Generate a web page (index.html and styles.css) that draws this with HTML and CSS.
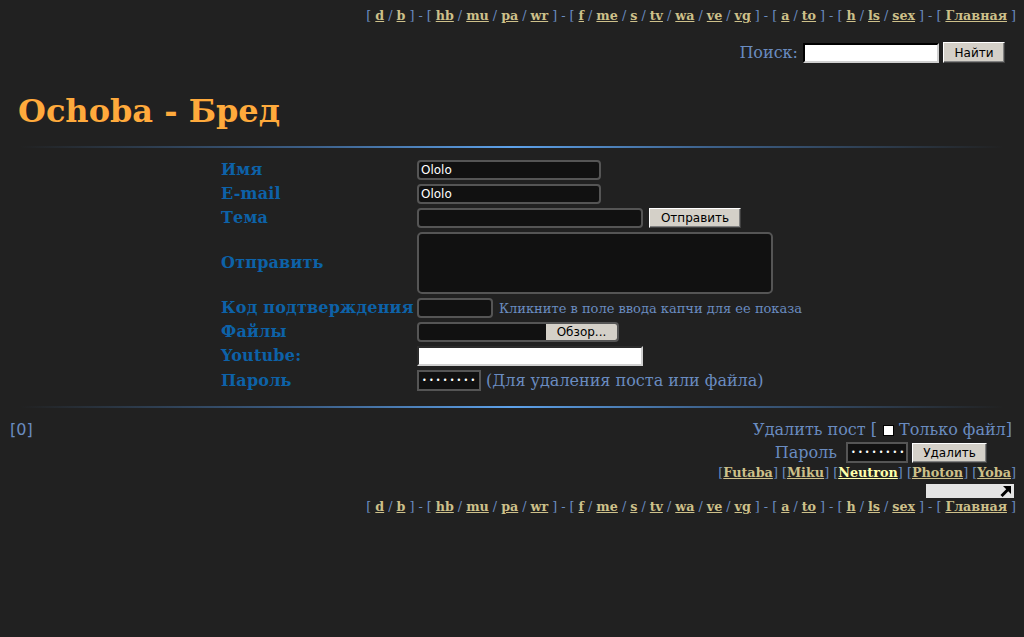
FILE: index.html
```html
<!DOCTYPE html>
<html lang="ru">
<head>
<meta charset="utf-8">
<title>Ochoba - Бред</title>
<link rel="stylesheet" href="styles.css">
</head>
<body>
<div class="nav">
[ <a href="#">d</a> / <a href="#">b</a> ] - [ <a href="#">hb</a> / <a href="#">mu</a> / <a href="#">pa</a> / <a href="#">wr</a> ] - [ <a href="#">f</a> / <a href="#">me</a> / <a href="#">s</a> / <a href="#">tv</a> / <a href="#">wa</a> / <a href="#">ve</a> / <a href="#">vg</a> ] - [ <a href="#">a</a> / <a href="#">to</a> ] - [ <a href="#">h</a> / <a href="#">ls</a> / <a href="#">sex</a> ] - [ <a href="#">Главная</a> ]
</div>
<div class="search">
<span class="search-label">Поиск:</span>
<span class="white-input search-input"></span>
<span class="btn search-btn">Найти</span>
</div>
<h1 class="title">Ochoba - Бред</h1>
<div class="hr"></div>
<div class="postform">
  <div class="label">Имя</div>
  <div class="field"><span class="dark-input w183">Ololo</span></div>
  <div class="label">E-mail</div>
  <div class="field"><span class="dark-input w183">Ololo</span></div>
  <div class="label">Тема</div>
  <div class="field"><span class="dark-input w225"></span><span class="btn send-btn">Отправить</span></div>
  <div class="label">Отправить</div>
  <div class="field"><span class="dark-input textarea"></span></div>
  <div class="label">Код подтверждения</div>
  <div class="field"><span class="dark-input w75"></span><span class="hint">Кликните в поле ввода капчи для ее показа</span></div>
  <div class="label">Файлы</div>
  <div class="field"><span class="dark-input file"><span class="file-empty"></span><span class="file-btn">Обзор...</span></span></div>
  <div class="label">Youtube:</div>
  <div class="field"><span class="white-input w225"></span></div>
  <div class="label">Пароль</div>
  <div class="field"><span class="pass-input w64">••••••••</span><span class="note">(Для удаления поста или файла)</span></div>
</div>
<div class="hr hr2"></div>
<div class="footer">
  <div class="pages">[0]</div>
  <div class="right">
    <div class="del-line">Удалить пост [<span class="check"></span>Только файл]</div>
    <div class="del-line pass-line">Пароль <span class="pass-input w62">••••••••</span> <span class="btn del-btn">Удалить</span></div>
    <div class="styles">[<a href="#">Futaba</a>] [<a href="#">Miku</a>] [<a href="#" class="cur">Neutron</a>] [<a href="#">Photon</a>] [<a href="#">Yoba</a>]</div>
    <div class="sel-line"><span class="select"><svg width="12" height="12" viewBox="0 0 12 12"><path d="M1.5 11 L9 3.5" stroke="#000" stroke-width="3"/><path d="M3 1 H11 V9 Z" fill="#000"/></svg></span></div>
    <div class="nav nav-bottom">
[ <a href="#">d</a> / <a href="#">b</a> ] - [ <a href="#">hb</a> / <a href="#">mu</a> / <a href="#">pa</a> / <a href="#">wr</a> ] - [ <a href="#">f</a> / <a href="#">me</a> / <a href="#">s</a> / <a href="#">tv</a> / <a href="#">wa</a> / <a href="#">ve</a> / <a href="#">vg</a> ] - [ <a href="#">a</a> / <a href="#">to</a> ] - [ <a href="#">h</a> / <a href="#">ls</a> / <a href="#">sex</a> ] - [ <a href="#">Главная</a> ]
    </div>
  </div>
</div>
</body>
</html>
```
FILE: styles.css
```css
html, body {
  background: #212121;
}
body {
  margin: 0;
  padding: 8px 8px 0 8px;
  font-family: "DejaVu Serif", serif;
  color: #6a8cc0;
  font-size: 16px;
}
a {
  color: #cdc08a;
  font-weight: bold;
}
.nav {
  text-align: right;
  font-size: 12.7px;
  line-height: 16px;
}
.search {
  display: flex;
  justify-content: flex-end;
  align-items: center;
  gap: 4px;
  margin-top: 18px;
  padding-right: 11px;
}
.search-label {
  font-size: 16px;
  margin-right: 1px;
}
.white-input {
  display: inline-block;
  box-sizing: border-box;
  background: #fff;
  border: 2px inset #d0d0d0;
  border-top-color: #808080;
  border-left-color: #808080;
  height: 20px;
}
.search-input {
  width: 136px;
  border-top-color: #000;
  border-left-color: #000;
}
.btn {
  display: inline-flex;
  align-items: center;
  justify-content: center;
  box-sizing: border-box;
  background: #d4d0c8;
  color: #000;
  font-family: "DejaVu Sans", sans-serif;
  font-size: 12px;
  height: 21px;
  border: 1px solid;
  border-color: #fff #404040 #404040 #fff;
  box-shadow: inset -1px -1px 0 #808080;
}
.search-btn {
  width: 62px;
}
.title {
  margin: 0;
  padding: 28px 0 0 10px;
  font-size: 32px;
  font-weight: bold;
  color: #ffaa3c;
  line-height: 40px;
}
.hr {
  height: 2px;
  margin: 15px 12px 0 12px;
  background: linear-gradient(to right, rgba(80,140,210,0) 0%, rgba(80,140,210,0.6) 30%, #5ea2ea 50%, rgba(80,140,210,0.6) 70%, rgba(80,140,210,0) 100%);
}
.postform {
  display: grid;
  grid-template-columns: 196px auto;
  row-gap: 4px;
  margin: 12px 0 0 213px;
  align-items: center;
}
.label {
  color: #0d62a8;
  font-weight: bold;
  font-size: 16px;
  letter-spacing: 0.2px;
  line-height: 20px;
  white-space: nowrap;
}
.field {
  display: flex;
  align-items: center;
}
.dark-input {
  display: inline-flex;
  align-items: center;
  box-sizing: border-box;
  height: 20px;
  background: #111;
  border: 2px solid #555;
  border-radius: 4px;
  color: #fff;
  font-family: "DejaVu Sans", sans-serif;
  font-size: 12px;
  padding-left: 2px;
}
.w183 { width: 184px; }
.w225 { width: 226px; }
.w75 { width: 76px; }
.w64 { width: 64px; }
.w62 { width: 62px; }
.send-btn {
  width: 92px;
  height: 20px;
  margin-left: 6px;
}
.textarea {
  width: 356px;
  height: 62px;
  border-radius: 5px;
}
.hint {
  font-size: 13px;
  margin-left: 6px;
}
.file {
  width: 202px;
  padding: 0;
  overflow: hidden;
}
.file-empty {
  flex: 1;
}
.file-btn {
  width: 71px;
  height: 100%;
  background: #d4d0c8;
  color: #000;
  display: flex;
  align-items: center;
  justify-content: center;
}
.pass-input {
  display: inline-flex;
  align-items: center;
  box-sizing: border-box;
  height: 21px;
  background: #111;
  border: 2px solid #555;
  color: #fff;
  font-family: "DejaVu Sans", sans-serif;
  font-size: 8px;
  letter-spacing: 2.2px;
  padding-left: 3px;
  overflow: hidden;
}
.note {
  margin-left: 5px;
  font-size: 16px;
}
.hr2 {
  margin-top: 15px;
}
.footer {
  display: flex;
  justify-content: space-between;
  align-items: flex-start;
  margin-top: 12px;
}
.pages {
  font-family: "DejaVu Sans", sans-serif;
  font-weight: normal;
  padding-left: 2px;
  line-height: 20px;
}
.right {
  display: flex;
  flex-direction: column;
  align-items: flex-end;
}
.del-line {
  line-height: 20px;
  padding-right: 4px;
  display: flex;
  align-items: center;
  white-space: pre;
}
.check {
  display: inline-block;
  width: 9px;
  height: 9px;
  background: #fff;
  border: 1px solid #000;
  margin: 0 5px 0 6px;
}
.pass-line {
  padding-right: 29px;
  margin-top: 2px;
  gap: 4px;
}
.del-btn {
  width: 75px;
  height: 20px;
}
.styles {
  font-size: 12.8px;
  line-height: 16px;
  margin-top: 2px;
}
.styles a.cur {
  color: #ffffaa;
}
.sel-line {
  padding-right: 2px;
  margin-top: 3px;
}
.select {
  display: flex;
  justify-content: flex-end;
  align-items: center;
  width: 88px;
  height: 14px;
  background: #e4e4e4;
  padding-right: 2px;
  box-sizing: border-box;
}
.nav-bottom {
  margin-top: 1px;
}
```
